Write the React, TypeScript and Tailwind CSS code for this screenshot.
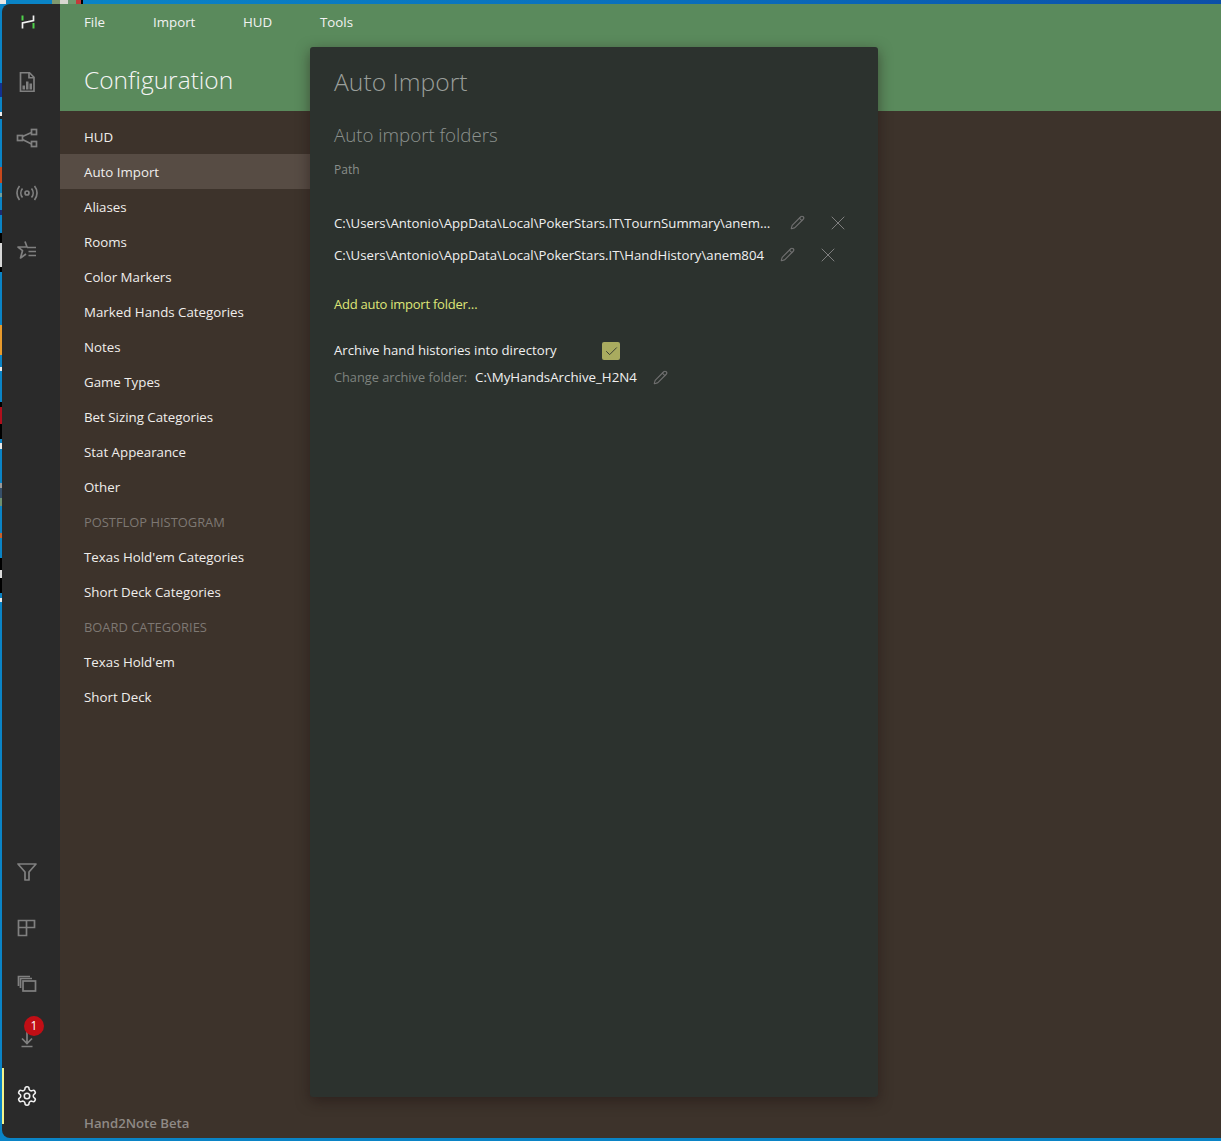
import React from 'react';
import { Pencil, X, Check } from 'lucide-react';

const menuItems: { label: string; heading?: boolean; active?: boolean }[] = [
  { label: 'HUD' },
  { label: 'Auto Import', active: true },
  { label: 'Aliases' },
  { label: 'Rooms' },
  { label: 'Color Markers' },
  { label: 'Marked Hands Categories' },
  { label: 'Notes' },
  { label: 'Game Types' },
  { label: 'Bet Sizing Categories' },
  { label: 'Stat Appearance' },
  { label: 'Other' },
  { label: 'POSTFLOP HISTOGRAM', heading: true },
  { label: "Texas Hold'em Categories" },
  { label: 'Short Deck Categories' },
  { label: 'BOARD CATEGORIES', heading: true },
  { label: "Texas Hold'em" },
  { label: 'Short Deck' },
];

// desktop peeking out at the left of the window
const desktopStrip = [
  'h-[4px] bg-[#e8e8e8]',
  'h-[79px] bg-[#0a84c6]',
  'h-[14px] bg-[#12308f]',
  'h-[15px] bg-[#0a84c6]',
  'h-[4px] bg-[#eeeeee]',
  'h-[3px] bg-[#222222]',
  'h-[48px] bg-[#0a84c6]',
  'h-[16px] bg-[#c8481c]',
  'h-[10px] bg-[#0a84c6]',
  'h-[4px] bg-[#6fa0a0]',
  'h-[13px] bg-[#0a84c6]',
  'h-[5px] bg-[#1c2a70]',
  'h-[18px] bg-[#0a84c6]',
  'h-[10px] bg-black',
  'h-[24px] bg-[#d8d8d8]',
  'h-[5px] bg-black',
  'h-[53px] bg-[#0a84c6]',
  'h-[30px] bg-[#e89a2c]',
  'h-[12px] bg-[#0a84c6]',
  'h-[4px] bg-[#e8e8e8]',
  'h-[31px] bg-[#0a84c6]',
  'h-[5px] bg-black',
  'h-[17px] bg-[#b00f1c]',
  'h-[15px] bg-black',
  'h-[4px] bg-[#0a84c6]',
  'h-[6px] bg-[#e8e8e8]',
  'h-[34px] bg-[#0a84c6]',
  'h-[5px] bg-[#999999]',
  'h-[10px] bg-[#36506a]',
  'h-[8px] bg-[#6f9070]',
  'h-[27px] bg-[#0a84c6]',
  'h-[5px] bg-[#c8602c]',
  'h-[20px] bg-[#0a84c6]',
  'h-[12px] bg-black',
  'h-[8px] bg-[#dddddd]',
  'h-[15px] bg-black',
  'h-[5px] bg-[#0a84c6]',
  'h-[4px] bg-[#e8e8e8]',
];

function Logo() {
  return (
    <svg width="14" height="14" viewBox="0 0 14 14" fill="none" strokeWidth="2">
      <path d="M1.500 .5v5M12.500 8v5.500" stroke="#4fd14a" />
      <path d="M1.500 13.500V8l11-2.500V.5" stroke="#f2f2f2" strokeWidth="1.700" />
    </svg>
  );
}

function SideIcon({ children }: { children: React.ReactNode }) {
  return (
    <svg width="22" height="22" viewBox="0 0 22 22" fill="none" stroke="#808080" strokeWidth="1.700">
      {children}
    </svg>
  );
}

function PathRow({ path, iconGap }: { path: string; iconGap: string }) {
  return (
    <div className="flex h-8 items-center">
      <span className="text-[13.200px] text-[#f0f0f0]">{path}</span>
      <Pencil size={15} strokeWidth={1.800} className={`${iconGap} -mt-[3px] text-[#6f6f6f]`} />
      <X size={24} strokeWidth={1} className="-mt-[3px] ml-[21px] text-[#7f7f7f]" />
    </div>
  );
}

function SettingsGear() {
  return (
    <svg width="22" height="22" viewBox="0 0 24 24" fill="none" stroke="#f0f0f0" strokeWidth="1.700" strokeLinecap="round" strokeLinejoin="round">
      <path d="M12.220 2h-.44a2 2 0 0 0-2 2v.18a2 2 0 0 1-1 1.730l-.43.250a2 2 0 0 1-2 0l-.15-.08a2 2 0 0 0-2.730.730l-.22.380a2 2 0 0 0 .730 2.730l.15.100a2 2 0 0 1 1 1.720v.510a2 2 0 0 1-1 1.740l-.15.090a2 2 0 0 0-.730 2.730l.22.380a2 2 0 0 0 2.730.730l.15-.08a2 2 0 0 1 2 0l.43.250a2 2 0 0 1 1 1.730V20a2 2 0 0 0 2 2h.44a2 2 0 0 0 2-2v-.18a2 2 0 0 1 1-1.730l.43-.250a2 2 0 0 1 2 0l.15.080a2 2 0 0 0 2.730-.730l.22-.390a2 2 0 0 0-.730-2.730l-.15-.080a2 2 0 0 1-1-1.740v-.500a2 2 0 0 1 1-1.740l.15-.090a2 2 0 0 0 .730-2.730l-.22-.380a2 2 0 0 0-2.730-.730l-.15.080a2 2 0 0 1-2 0l-.43-.250a2 2 0 0 1-1-1.730V4a2 2 0 0 0-2-2z" />
      <circle cx="12" cy="12" r="3" />
    </svg>
  );
}

export default function App() {
  return (
    <div
      className="relative h-[1141px] w-[1221px] overflow-hidden bg-[#0a84c6] pb-[3px] pl-[2px] pt-[4px] text-[13.300px]"
      style={{ fontFamily: '"Open Sans", "Noto Sans", sans-serif' }}
    >
      <div className="absolute left-0 top-0 flex h-[4px] w-full">
        <div className="w-[6px] bg-[#e8e8e8]" />
        <div className="w-[46px] bg-[#0a84c6]" />
        <div className="w-[8px] bg-[#7f9a70]" />
        <div className="w-[8px] bg-[#d8d8d0]" />
        <div className="w-[8px] bg-[#6f9a70]" />
        <div className="w-[5px] bg-[#c23a3a]" />
        <div className="w-[2px] bg-black" />
        <div className="flex-1 bg-linear-to-r from-[#0a84c6] via-[#0a70bc] to-[#0c4fa8]" />
      </div>
      <div className="absolute left-0 top-0 flex w-[2px] flex-col">
        {desktopStrip.map((block, i) => (
          <div key={i} className={block} />
        ))}
      </div>
      <div className="relative flex h-full overflow-hidden rounded-bl-[8px] rounded-tl-[8px]">
        <aside className="flex w-[58px] flex-col items-center bg-[#2a2a2a] pr-[8px] text-[#808080]">
          <div className="ml-[2px] mt-[11px] flex h-[14px] items-center">
            <Logo />
          </div>
          <div className="mt-[42px] flex flex-col items-center gap-[33.500px]">
            <SideIcon>
              <path d="M4.500 1.750h9L18 6.250v14H4.500z" />
              <path d="M13 2v4.750h5" />
              <path d="M6.500 18.500v-4h2.500v4zM10 18.500v-8h2.500v8zM13.500 18.500v-6H16v6z" fill="#808080" stroke="none" />
            </SideIcon>
            <SideIcon>
              <rect x="1.500" y="8.500" width="5" height="5" />
              <rect x="15.500" y="2.500" width="5" height="5" />
              <rect x="15.500" y="14.500" width="5" height="5" />
              <path d="M6.500 9.500 15.500 5.500M6.500 12.500 15.500 17" />
            </SideIcon>
            <SideIcon>
              <circle cx="11" cy="11" r="2" />
              <path d="M6.500 6.500a7 7 0 0 0 0 9M15.500 6.500a7 7 0 0 1 0 9M3.500 4a11 11 0 0 0 0 14M18.500 4a11 11 0 0 1 0 14" />
            </SideIcon>
            <div className="mt-[1px]">
              <SideIcon>
                <path d="M9 2.500 11 8H2l4.500 3.700L4.500 19l5.500-4" strokeLinejoin="round" />
                <path d="M11 8.500h9M12.500 12.500h7.500M12.500 16.500h7.500" />
              </SideIcon>
            </div>
          </div>
          <div className="mt-auto flex flex-col items-center">
            <SideIcon>
              <path d="M2 3h18l-7 8v8h-4v-8z" strokeLinejoin="round" />
            </SideIcon>
            <div className="mt-[34px]">
              <SideIcon>
                <path d="M2.500 3.500h16v7h-8v8h-8zM10.500 3.500v7h-8" />
              </SideIcon>
            </div>
            <div className="mt-[34px]">
              <SideIcon>
                <path d="M2.500 13V3.500H14" />
                <path d="M4.500 15V5.500H16" />
                <rect x="7" y="8" width="12.500" height="10" />
              </SideIcon>
            </div>
            <div className="relative mt-[32px]">
              <SideIcon>
                <path d="M11 4v12M6 11.500l5 5 5-5M5.500 19.500h11" />
              </SideIcon>
              <span className="absolute -right-[6px] -top-[11px] flex h-5 w-5 items-center justify-center rounded-full bg-[#c10e15] text-[12px] text-white">
                1
              </span>
            </div>
            <div className="relative mt-[19px] flex h-[56px] w-[50px] items-center justify-center">
              <span className="absolute bottom-0 left-0 top-0 w-[2px] bg-[#f4f48a]" />
              <SettingsGear />
            </div>
          </div>
          <div className="h-[14px]" />
        </aside>
        <main className="flex min-w-0 flex-1 flex-col bg-[#3d332b]">
          <header className="h-[107px] bg-[#5a8a5c] px-6 pt-[9px]">
            <nav className="flex text-[#f2f2f2]">
              <span className="w-[69px]">File</span>
              <span className="w-[90px]">Import</span>
              <span className="w-[77px]">HUD</span>
              <span>Tools</span>
            </nav>
            <h1 className="mt-[30px] text-[24.500px] font-light leading-[34px] text-[#f5f5f5]">Configuration</h1>
          </header>
          <div className="flex flex-1 flex-col pt-2">
            <ul className="w-[250px]">
              {menuItems.map((item) => (
                <li
                  key={item.label}
                  className={`flex h-[35px] items-center px-6 pt-[2px] ${
                    item.heading ? 'text-[12.900px] text-[#7e7873]' : 'text-[#f0eeec]'
                  } ${item.active ? 'bg-[#574c44]' : ''}`}
                >
                  {item.label}
                </li>
              ))}
            </ul>
            <div className="mt-auto px-6 pb-[4px] text-[13.200px] font-semibold text-[#8f8a86]">Hand2Note Beta</div>
          </div>
        </main>
        <section className="absolute bottom-[41px] left-[308px] top-[43px] w-[568px] rounded-[3px] bg-[#2c322e] px-6 pt-[19px] shadow-[0_4px_14px_rgba(30,15,15,0.5)]">
          <h2 className="text-[24.700px] font-light leading-8 text-[#9a9f9b]">Auto Import</h2>
          <h3 className="mt-[25px] text-[18.700px] font-light leading-6 text-[#8d928e]">Auto import folders</h3>
          <div className="mt-[13px] text-[12px] leading-5 text-[#8a8f8b]">Path</div>
          <div className="mt-[28px]">
            <PathRow path="C:\Users\Antonio\AppData\Local\PokerStars.IT\TournSummary\anem…" iconGap="ml-[20px]" />
            <PathRow path="C:\Users\Antonio\AppData\Local\PokerStars.IT\HandHistory\anem804" iconGap="ml-[16px]" />
          </div>
          <div className="mt-[22px] text-[13px] leading-5 tracking-[-0.25px] text-[#dfe678]">Add auto import folder…</div>
          <div className="mt-[27px] flex h-5 items-center text-[13.200px] text-[#f0f0f0]">
            <span className="w-[268px]">Archive hand histories into directory</span>
            <span className="flex h-[18px] w-[18px] items-center justify-center rounded-[2px] bg-[#a9ab5f]">
              <Check size={15} strokeWidth={1.500} className="text-[#343a30]" />
            </span>
          </div>
          <div className="mt-[7px] flex h-5 items-center">
            <span className="w-[141px] text-[12.750px] text-[#7e837f]">Change archive folder:</span>
            <span className="text-[#f0f0f0]">C:\MyHandsArchive_H2N4</span>
            <Pencil size={15} strokeWidth={1.800} className="-mt-[2px] ml-[16px] text-[#6f6f6f]" />
          </div>
        </section>
      </div>
    </div>
  );
}
